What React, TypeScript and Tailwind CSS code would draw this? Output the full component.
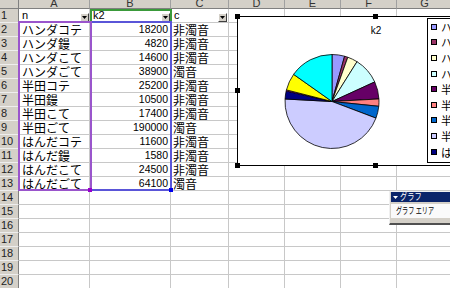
import React from 'react';

const rows: [string, string, string][] = [
  ['ハンダコテ', '18200', '非濁音'],
  ['ハンダ鏝', '4820', '非濁音'],
  ['ハンダこて', '14600', '非濁音'],
  ['ハンダごて', '38900', '濁音'],
  ['半田コテ', '25200', '非濁音'],
  ['半田鏝', '10500', '非濁音'],
  ['半田こて', '17400', '非濁音'],
  ['半田ごて', '190000', '濁音'],
  ['はんだコテ', '11600', '非濁音'],
  ['はんだ鏝', '1580', '非濁音'],
  ['はんだこて', '24500', '非濁音'],
  ['はんだごて', '64100', '濁音'],
];

const colors = [
  '#9999FF', '#993366', '#FFFFCC', '#CCFFFF', '#660066', '#FF8080',
  '#0066CC', '#CCCCFF', '#000080', '#FF00FF', '#FFFF00', '#00FFFF',
];

const letters = ['A', 'B', 'C', 'D', 'E', 'F', 'G'];

function FilterBtn() {
  return (
    <div className="w-[9px] h-[9px] shrink-0 bg-[#d4d0c8] border border-t-white border-l-white border-r-[#404040] border-b-[#404040] flex items-center justify-center">
      <svg width="5" height="3" viewBox="0 0 5 3">
        <path d="M0 0H5L2.5 3Z" fill="#000" />
      </svg>
    </div>
  );
}

function Pie() {
  const vals = rows.map((r) => Number(r[1]));
  const total = vals.reduce((a, b) => a + b, 0);
  const cx = 94;
  const cy = 84.5;
  const r = 47;
  let a = 0;
  const paths = vals.map((v, i) => {
    const a0 = a;
    a += (v / total) * Math.PI * 2;
    const a1 = a;
    const x0 = cx + r * Math.sin(a0);
    const y0 = cy - r * Math.cos(a0);
    const x1 = cx + r * Math.sin(a1);
    const y1 = cy - r * Math.cos(a1);
    const large = a1 - a0 > Math.PI ? 1 : 0;
    return (
      <path
        key={i}
        d={`M${cx} ${cy}L${x0} ${y0}A${r} ${r} 0 ${large} 1 ${x1} ${y1}Z`}
        fill={colors[i]}
        stroke="#000"
        strokeWidth="0.8"
        strokeLinejoin="round"
      />
    );
  });
  return (
    <svg className="absolute left-0 top-0" width="200" height="148">
      {paths}
    </svg>
  );
}

export default function App() {
  const cell = 'border-r border-b border-[#c8c8c8] overflow-hidden whitespace-nowrap';
  const jp = "font-['Noto_Sans_CJK_JP',sans-serif] text-[12px] leading-[13px] text-black";
  const num = "font-['Liberation_Sans',sans-serif] text-[10.5px] leading-[13px] text-black";
  const lat = "font-['Liberation_Sans',sans-serif] text-[11px] leading-[13px] text-black";

  return (
    <div className="relative w-[450px] h-[288px] overflow-hidden bg-white">
      <div className="grid grid-cols-[19px_71px_81px_58px_56px_56px_56px_56px] grid-rows-[9px_repeat(20,14px)]">
        <div className="bg-[#d4d0c8] border-r border-b border-[#808080]" />
        {letters.map((l) => (
          <div
            key={l}
            className="bg-[#d4d0c8] border-r border-r-[#a0a0a0] border-b border-b-[#808080] flex justify-center items-start overflow-hidden font-['Liberation_Sans',sans-serif] text-[11px] leading-[7px] text-[#333]"
          >
            {l}
          </div>
        ))}

        {Array.from({ length: 20 }, (_, i) => {
          const n = i + 1;
          const d = n >= 2 && n <= 13 ? rows[n - 2] : null;
          return (
            <React.Fragment key={n}>
              <div className="bg-[#d4d0c8] border-r border-r-[#808080] border-b border-b-[#eeeeee] pl-[1px] font-['Liberation_Sans',sans-serif] text-[11px] leading-[13px] text-[#222] overflow-hidden">
                {n}
              </div>
              {n === 1 ? (
                <>
                  <div className={`${cell} flex items-end justify-between pl-[3px]`}>
                    <span className={`${lat} self-center`}>n</span>
                    <FilterBtn />
                  </div>
                  <div className={`${cell} flex items-end justify-between pl-[3px]`}>
                    <span className={`${lat} self-center`}>k2</span>
                    <FilterBtn />
                  </div>
                  <div className={`${cell} flex items-end justify-between pl-[3px] pr-[1px]`}>
                    <span className={`${lat} self-center`}>c</span>
                    <FilterBtn />
                  </div>
                </>
              ) : d ? (
                <>
                  <div className={`${cell} flex items-center pl-[3px]`}>
                    <span className={jp}>{d[0]}</span>
                  </div>
                  <div className={`${cell} flex items-center justify-end pr-[2px]`}>
                    <span className={num}>{d[1]}</span>
                  </div>
                  <div className={`${cell} flex items-center pl-[2px]`}>
                    <span className={jp}>{d[2]}</span>
                  </div>
                </>
              ) : (
                <>
                  <div className={cell} />
                  <div className={cell} />
                  <div className={cell} />
                </>
              )}
              <div className={cell} />
              <div className={cell} />
              <div className={cell} />
              <div className={cell} />
            </React.Fragment>
          );
        })}
      </div>

      {/* range finder highlights */}
      <div className="absolute left-[90px] top-[9px] w-[82px] h-[14px] border-2 border-[#3a9a3a]" />
      <div className="absolute left-[90px] top-[21px] w-[82px] h-[170px] border-2 border-[#5a55d8]" />
      <div className="absolute left-[18px] top-[21px] w-[74px] h-[170px] border-2 border-[#9a55cc]" />
      <div className="absolute left-[88px] top-[188px] w-[4px] h-[4px] bg-[#9900cc]" />
      <div className="absolute left-[169px] top-[188px] w-[4px] h-[4px] bg-[#0000ee]" />

      {/* chart object */}
      <div className="absolute left-[237px] top-[16px] w-[276px] h-[150px] border border-black bg-white">
        <Pie />
        <div className="absolute left-[128px] top-[8px] w-[20px] text-center font-['Liberation_Sans',sans-serif] text-[10px] leading-[12px] text-black">
          k2
        </div>
        <div className="absolute left-[189px] top-[1px] w-[90px] h-[145px] border border-black bg-white flex flex-col">
          {rows.slice(0, 9).map((r, i) => (
            <div key={i} className="h-[15.6px] shrink-0 flex items-center pl-[3px] gap-[4px]">
              <div className="w-[6px] h-[6px] shrink-0 border border-black" style={{ backgroundColor: colors[i] }} />
              <span className="font-['Noto_Sans_CJK_JP',sans-serif] text-[11px] leading-[12px] text-black whitespace-nowrap">
                {r[0]}
              </span>
            </div>
          ))}
        </div>
        {/* handles */}
        <div className="absolute -left-[3px] -top-[3px] w-[5px] h-[5px] bg-black" />
        <div className="absolute left-[135px] -top-[3px] w-[5px] h-[5px] bg-black" />
        <div className="absolute -left-[3px] top-[71px] w-[5px] h-[5px] bg-black" />
        <div className="absolute -left-[3px] -bottom-[3px] w-[5px] h-[5px] bg-black" />
        <div className="absolute left-[135px] -bottom-[3px] w-[5px] h-[5px] bg-black" />
      </div>

      {/* chart toolbar */}
      <div className="absolute left-[389px] top-[191px] w-[80px] h-[34px] bg-[#d4d0c8] border-l border-l-[#f0f0f0] border-t border-t-[#f0f0f0] border-b-2 border-b-[#505050] pl-[1px] pt-[0px] flex flex-col">
        <div className="h-[10px] bg-[#0a246a] flex items-center pl-[2px] gap-[2px] overflow-hidden">
          <svg width="5" height="3" viewBox="0 0 5 3">
            <path d="M0 0H5L2.5 3Z" fill="#fff" />
          </svg>
          <span className="inline-block origin-left scale-x-[0.8] font-['Noto_Sans_CJK_JP',sans-serif] text-[9px] leading-[10px] text-white whitespace-nowrap">
            グラフ
          </span>
        </div>
        <div className="mt-[2px] h-[14px] bg-[#fafafa] flex items-center pl-[5px] overflow-hidden">
          <span className="inline-block origin-left scale-x-[0.68] font-['Noto_Sans_CJK_JP',sans-serif] text-[9px] leading-[12px] text-black whitespace-nowrap">
            グラフ エリア
          </span>
        </div>
      </div>
    </div>
  );
}
